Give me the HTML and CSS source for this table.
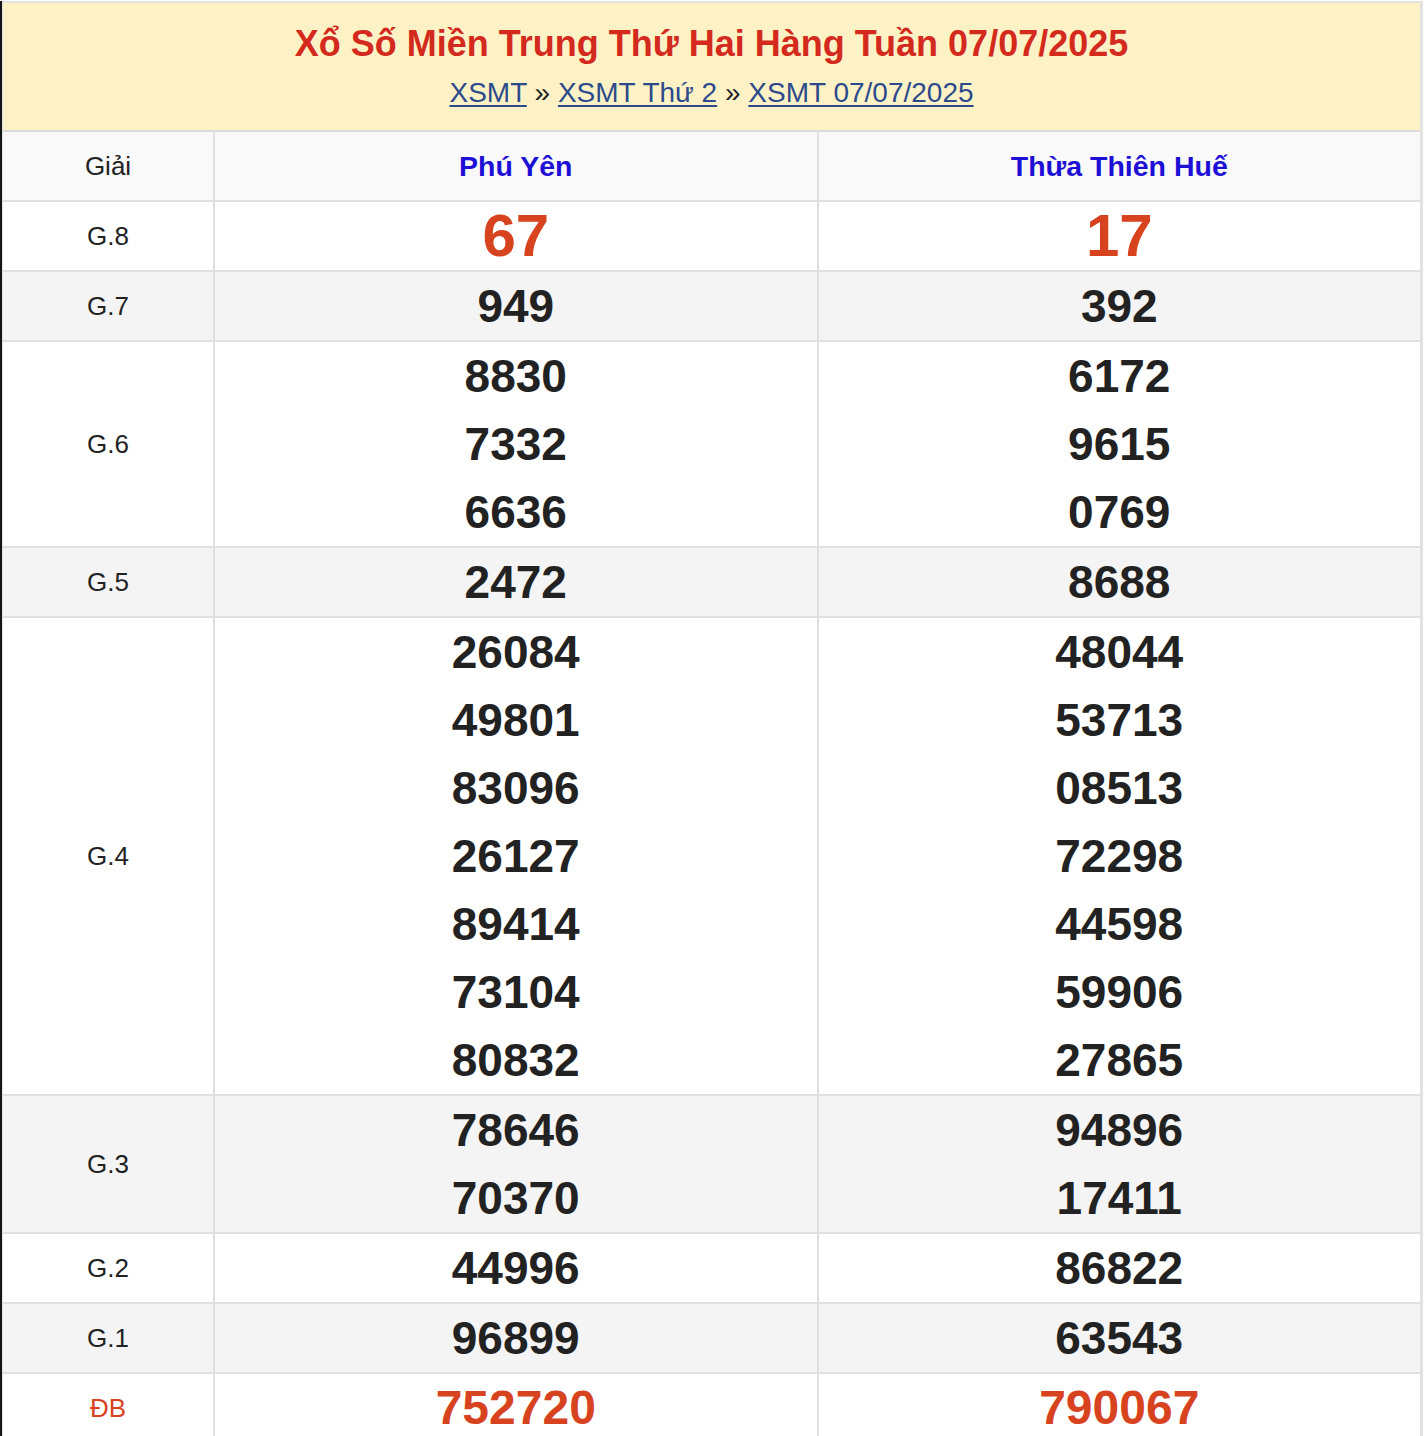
FILE: index.html
```html
<!DOCTYPE html>
<html lang="vi">
<head>
<meta charset="utf-8">
<title>XSMT 07/07/2025</title>
<link rel="stylesheet" href="styles.css">
</head>
<body>
<div class="page">
  <div class="box">
    <div class="head">
      <h1 class="title">Xổ Số Miền Trung Thứ Hai Hàng Tuần 07/07/2025</h1>
      <div class="crumbs"><a href="#">XSMT</a> » <a href="#">XSMT Thứ 2</a> » <a href="#">XSMT 07/07/2025</a></div>
    </div>
    <div class="table">
      <div class="row row-head">
        <div class="cell label">Giải</div>
        <div class="cell prov">Phú Yên</div>
        <div class="cell prov">Thừa Thiên Huế</div>
      </div>
      <div class="row">
        <div class="cell label">G.8</div>
        <div class="cell nums big red"><span>67</span></div>
        <div class="cell nums big red"><span>17</span></div>
      </div>
      <div class="row alt">
        <div class="cell label">G.7</div>
        <div class="cell nums"><span>949</span></div>
        <div class="cell nums"><span>392</span></div>
      </div>
      <div class="row">
        <div class="cell label">G.6</div>
        <div class="cell nums"><span>8830</span><span>7332</span><span>6636</span></div>
        <div class="cell nums"><span>6172</span><span>9615</span><span>0769</span></div>
      </div>
      <div class="row alt">
        <div class="cell label">G.5</div>
        <div class="cell nums"><span>2472</span></div>
        <div class="cell nums"><span>8688</span></div>
      </div>
      <div class="row">
        <div class="cell label">G.4</div>
        <div class="cell nums"><span>26084</span><span>49801</span><span>83096</span><span>26127</span><span>89414</span><span>73104</span><span>80832</span></div>
        <div class="cell nums"><span>48044</span><span>53713</span><span>08513</span><span>72298</span><span>44598</span><span>59906</span><span>27865</span></div>
      </div>
      <div class="row alt">
        <div class="cell label">G.3</div>
        <div class="cell nums"><span>78646</span><span>70370</span></div>
        <div class="cell nums"><span>94896</span><span>17411</span></div>
      </div>
      <div class="row">
        <div class="cell label">G.2</div>
        <div class="cell nums"><span>44996</span></div>
        <div class="cell nums"><span>86822</span></div>
      </div>
      <div class="row alt">
        <div class="cell label">G.1</div>
        <div class="cell nums"><span>96899</span></div>
        <div class="cell nums"><span>63543</span></div>
      </div>
      <div class="row">
        <div class="cell label red">ĐB</div>
        <div class="cell nums db red"><span>752720</span></div>
        <div class="cell nums db red"><span>790067</span></div>
      </div>
    </div>
  </div>
</div>
</body>
</html>
```
FILE: styles.css
```css
html, body {
  margin: 0;
  padding: 0;
  background: #ffffff;
}
body {
  font-family: "Liberation Sans", Arial, Helvetica, sans-serif;
  color: #222222;
}
.page {
  border-left: 2px solid #151515;
  min-height: 1436px;
  box-sizing: border-box;
}
.box {
  width: 1421px;
  border: 2px solid #e2e2e2;
  border-left-width: 1px;
  border-right-width: 3px;
  border-bottom: none;
  box-sizing: border-box;
  margin-top: 1px;
}
.head {
  background: #fdf2c5;
  padding: 19px 0 19px;
  text-align: center;
}
.title {
  margin: 0 0 9px;
  font-size: 36px;
  line-height: 44px;
  font-weight: 700;
  color: #d42a1e;
}
.crumbs {
  font-size: 28px;
  line-height: 36px;
  color: #222222;
}
.crumbs a {
  color: #2c4a8c;
  text-decoration: underline;
  text-underline-offset: 3px;
  text-decoration-thickness: 2px;
}
.table {
  background: #e0e0e0;
  border-top: 2px solid #dcdcdc;
}
.row {
  display: grid;
  grid-template-columns: 210px 1fr 1fr;
  column-gap: 2px;
  border-bottom: 2px solid #e0e0e0;
}
.cell {
  background: #ffffff;
  display: flex;
  flex-direction: column;
  align-items: center;
  justify-content: center;
  text-align: center;
}
.alt .cell {
  background: #f4f4f4;
}
.row-head .cell {
  background: #f9f9f9;
  height: 68px;
}
.label {
  font-size: 26px;
  color: #222222;
}
.prov {
  font-size: 28.5px;
  font-weight: 700;
  color: #1d0fd6;
}
.nums span {
  display: block;
  font-size: 46px;
  line-height: 68px;
  font-weight: 700;
  color: #222222;
}
.nums.big span {
  font-size: 60px;
}
.nums.db span {
  font-size: 48px;
}
.red,
.nums.red span {
  color: #d8431f;
}
```
